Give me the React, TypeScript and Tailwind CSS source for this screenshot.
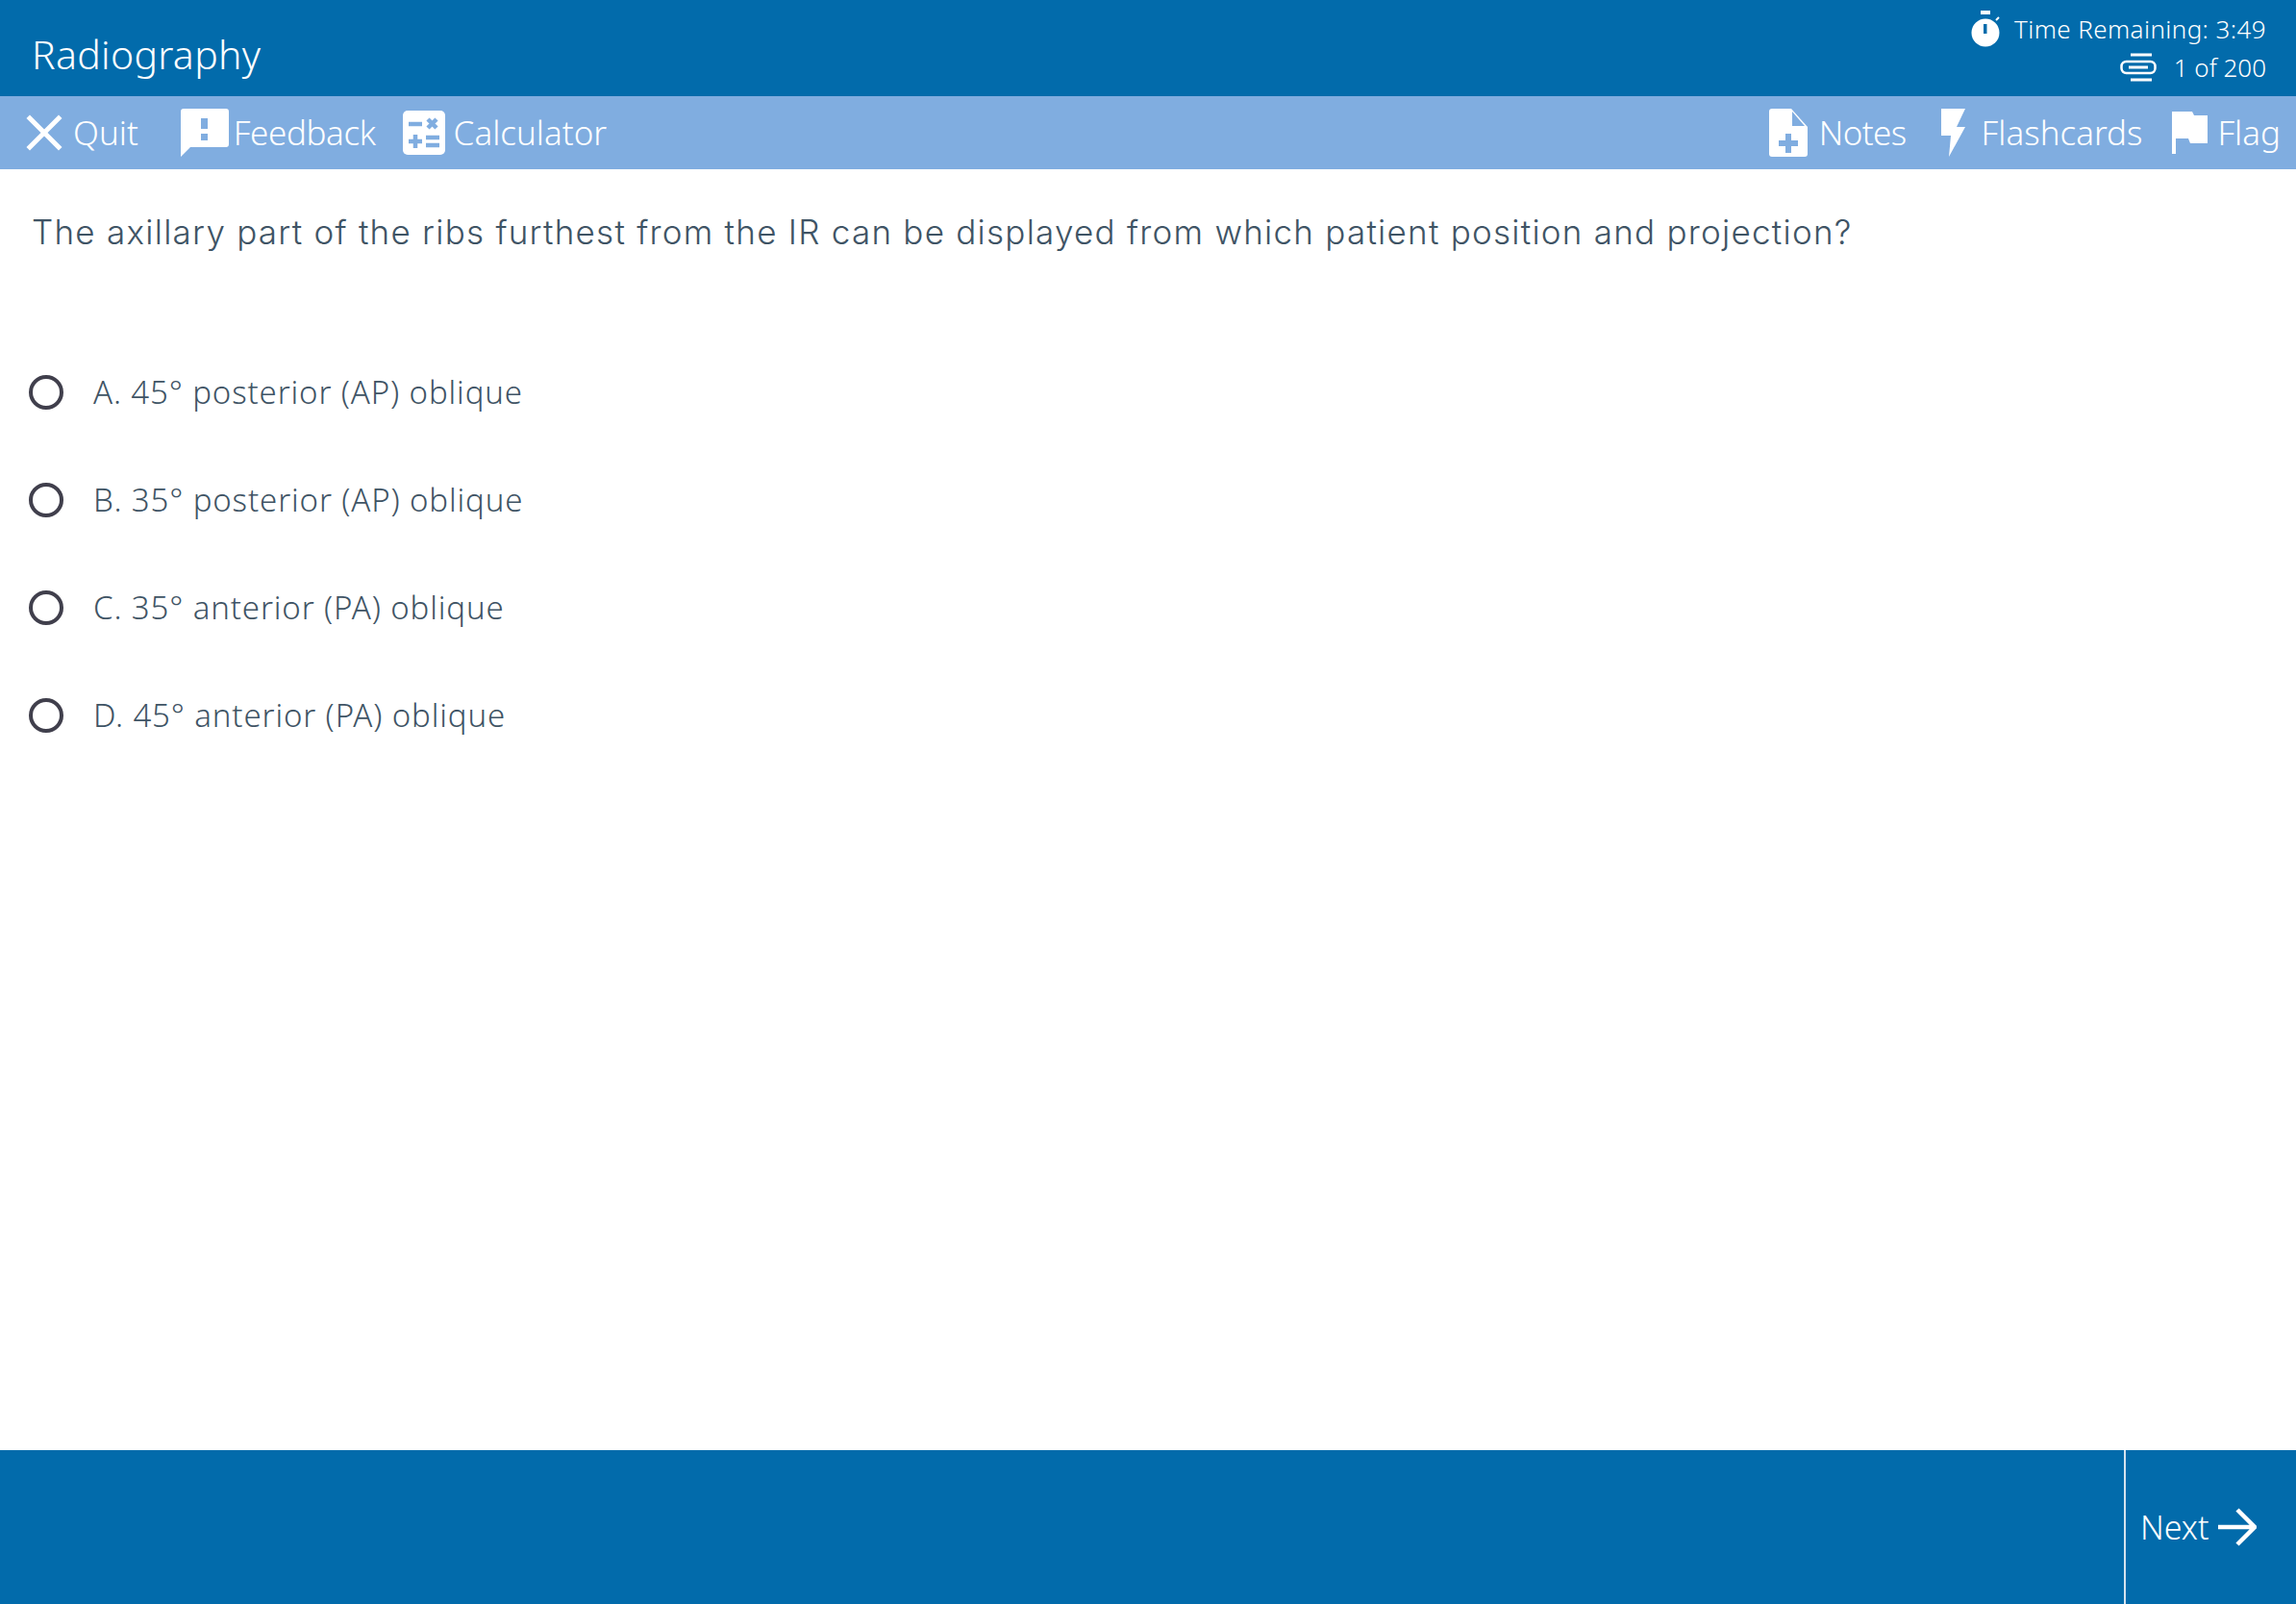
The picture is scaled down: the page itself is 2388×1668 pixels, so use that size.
import React from "react";

const sans = "font-['Noto_Sans',sans-serif]";

function XIcon() {
  return (
    <svg width="38" height="38" viewBox="0 0 38 38" className="shrink-0">
      <path d="M4 4 L34 34 M34 4 L4 34" stroke="#fff" strokeWidth="5" strokeLinecap="square" fill="none" />
    </svg>
  );
}
function FeedbackIcon() {
  return (
    <svg width="50" height="50" viewBox="0 0 50 50" className="shrink-0">
      <path d="M3 0 H47 a3 3 0 0 1 3 3 V37 a3 3 0 0 1 -3 3 H10 L0 50 V3 a3 3 0 0 1 3 -3 Z" fill="#fff" />
      <rect x="21" y="10" width="7" height="11" fill="#80ade0" />
      <rect x="21" y="26" width="7" height="7" fill="#80ade0" />
    </svg>
  );
}
function CalcIcon() {
  return (
    <svg width="44" height="46" viewBox="0 0 44 46" className="shrink-0">
      <rect width="44" height="46" rx="5" fill="#fff" />
      <g fill="none" stroke="#80ade0" strokeWidth="4.5">
        <path d="M6 14 H20" />
        <path d="M26 9 L35 18 M35 9 L26 18" />
        <path d="M6 32 H20 M13 25 V39" />
        <path d="M24 28 H38 M24 36 H38" />
      </g>
    </svg>
  );
}
function NotesIcon() {
  return (
    <svg width="40" height="50" viewBox="0 0 40 50" className="shrink-0">
      <path d="M3 0 H23 L40 19 V47 a3 3 0 0 1 -3 3 H3 a3 3 0 0 1 -3 -3 V3 a3 3 0 0 1 3 -3 Z" fill="#fff" />
      <path d="M24 3 V18 H37 Z" fill="#80ade0" />
      <path d="M10 36 H30 M20 26 V46" stroke="#80ade0" strokeWidth="6" fill="none" />
    </svg>
  );
}
function BoltIcon() {
  return (
    <svg width="25" height="50" viewBox="0 0 25 50" className="shrink-0">
      <path d="M0 0 H25 L16 19 H25 L8 50 L10 28 H0 Z" fill="#fff" />
    </svg>
  );
}
function FlagIcon() {
  return (
    <svg width="37" height="44" viewBox="0 0 37 44" className="shrink-0">
      <path d="M0 0 H21 L23 4 H37 V33 H19 L17 28 H4 V44 H0 Z" fill="#fff" />
    </svg>
  );
}
function TimerIcon() {
  return (
    <svg width="30" height="38" viewBox="0 0 30 38" className="shrink-0">
      <rect x="10" y="0" width="10" height="4" fill="#fff" />
      <circle cx="15" cy="23" r="14.5" fill="#fff" />
      <path d="M26 10 L29 7" stroke="#fff" strokeWidth="2" />
      <rect x="13" y="14" width="3.5" height="10" fill="#026bab" />
    </svg>
  );
}
function QueueIcon() {
  return (
    <svg width="38" height="30" viewBox="0 0 38 30" className="shrink-0">
      <path d="M11 2 H33 M11 28 H33" stroke="#fff" strokeWidth="3" fill="none" />
      <rect x="1.5" y="9" width="35" height="12" rx="5" fill="none" stroke="#fff" strokeWidth="2.5" />
      <path d="M9 15 H29" stroke="#fff" strokeWidth="3" />
    </svg>
  );
}
function ArrowIcon() {
  return (
    <svg width="40" height="40" viewBox="0 0 40 40" className="shrink-0">
      <path d="M0 20 H36 M20 2 L38 20 L20 38" stroke="#fff" strokeWidth="4.5" fill="none" />
    </svg>
  );
}

function Option({ label }: { label: string }) {
  return (
    <div className="flex h-[112px] items-center pl-[30px]">
      <span className="h-[36px] w-[36px] shrink-0 rounded-full border-[4px] border-[#403f4c]" />
      <span className="ml-[31px] text-[33px] font-light tracking-[0.87px] text-[#3f5465]">{label}</span>
    </div>
  );
}

export default function App() {
  return (
    <div className={`flex h-[1668px] w-[2388px] flex-col overflow-hidden bg-white ${sans}`}>
      <header className="flex h-[100px] shrink-0 items-start justify-between bg-[#026bab] text-white">
        <div className="pl-[33px] pt-[28px] text-[41px] leading-[56px] font-light tracking-[0.3px]">Radiography</div>
        <div className="flex flex-col items-end pr-[31px] pt-[10px] text-[26px] leading-[40px] font-light">
          <div className="flex items-center">
            <TimerIcon />
            <span className="ml-[15px] tracking-[0.4px]">Time Remaining: 3:49</span>
          </div>
          <div className="flex items-center">
            <QueueIcon />
            <span className="ml-[18px]">1 of 200</span>
          </div>
        </div>
      </header>
      <nav className="flex h-[76px] shrink-0 items-center justify-between bg-[#80ade0] text-[35px] font-light text-white">
        <div className="flex items-center pl-[27px]">
          <XIcon />
          <span className="ml-[11px]">Quit</span>
          <span className="ml-[44px]"><FeedbackIcon /></span>
          <span className="ml-[5px] tracking-[-0.4px]">Feedback</span>
          <span className="ml-[28px]"><CalcIcon /></span>
          <span className="ml-[9px]">Calculator</span>
        </div>
        <div className="flex items-center pr-[16px]">
          <NotesIcon />
          <span className="ml-[12px] tracking-[-0.6px]">Notes</span>
          <span className="ml-[36px]"><BoltIcon /></span>
          <span className="ml-[17px]">Flashcards</span>
          <span className="ml-[31px]"><FlagIcon /></span>
          <span className="ml-[10px]">Flag</span>
        </div>
      </nav>
      <main className="flex-1">
        <p className="pl-[33px] pt-[41px] font-['Inter',sans-serif] text-[35px] leading-[48px] font-light tracking-[1.25px] text-[#3f5465]">
          The axillary part of the ribs furthest from the IR can be displayed from which patient position and projection?
        </p>
        <div className="mt-[87px]">
          <Option label="A. 45° posterior (AP) oblique" />
          <Option label="B. 35° posterior (AP) oblique" />
          <Option label="C. 35° anterior (PA) oblique" />
          <Option label="D. 45° anterior (PA) oblique" />
        </div>
      </main>
      <footer className="flex h-[160px] shrink-0 justify-end bg-[#026bab] text-white">
        <div className="flex w-[179px] items-center border-l-2 border-[#d5e3ee] pl-[15px] text-[34px] font-light">
          <span>Next</span>
          <span className="ml-[9px]"><ArrowIcon /></span>
        </div>
      </footer>
    </div>
  );
}
